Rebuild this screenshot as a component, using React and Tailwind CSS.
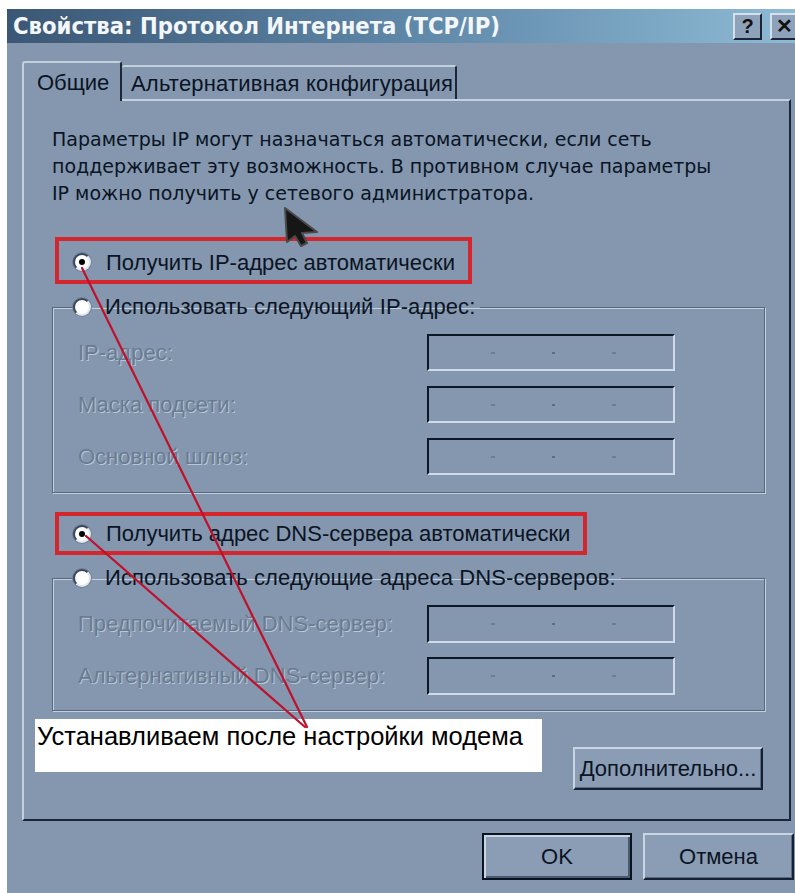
import React from "react";

const ui = { fontFamily: '"Liberation Sans", Arial, sans-serif' };
const para = { fontFamily: '"DejaVu Sans", "Liberation Sans", sans-serif' };

function Radio({ checked }) {
  return (
    <span className="relative flex h-[18px] w-[18px] shrink-0 items-center justify-center rounded-full border-2 border-t-[#3b4659] border-l-[#3b4659] border-b-[#dfe6ee] border-r-[#dfe6ee] bg-white shadow-[0_0_0_1px_#6f8299]">
      {checked && <span className="h-[6px] w-[6px] rounded-full bg-black" />}
    </span>
  );
}

function IpBox({ h = 37 }) {
  return (
    <div
      className={`flex w-[248px] items-center border-2 border-t-[#0e1726] border-l-[#0e1726] border-b-[#cfdbe8] border-r-[#cfdbe8] bg-[#8497ae] ${h === 38 ? "h-[38px]" : "h-[37px]"}`}
    >
      <span className="ml-[62px] h-[2px] w-[4px] bg-[#6d7d92]" />
      <span className="ml-[57px] h-[2px] w-[3px] bg-[#5d6c80]" />
      <span className="ml-[57px] h-[2px] w-[4px] bg-[#6d7d92]" />
    </div>
  );
}

function FieldRow({ label, h }) {
  return (
    <div className="flex items-center">
      <span
        className="w-[374px] pl-[25px] text-[22px] leading-[24px] text-[#6a7b91] [text-shadow:1px_1px_0_#b8c6d6]"
        style={ui}
      >
        {label}
      </span>
      <IpBox h={h} />
    </div>
  );
}

function Button({ children, className = "", isDefault = false }) {
  return (
    <div
      className={`flex items-center justify-center bg-[#8a9db4] text-[22px] text-[#0a1424] ${
        isDefault
          ? "border-2 border-[#0b1220] shadow-[inset_2px_2px_0_#c9d5e3,inset_-2px_-2px_0_#4a5a70]"
          : "border-2 border-t-[#c9d5e3] border-l-[#c9d5e3] border-b-[#162033] border-r-[#162033] shadow-[inset_-1px_-1px_0_#5a6b82]"
      } ${className}`}
      style={ui}
    >
      {children}
    </div>
  );
}

function Legend({ text, checked = false }) {
  return (
    <legend className="ml-[20px] flex h-[24px] items-center gap-[14px] pr-[5px]">
      <Radio checked={checked} />
      <span className="text-[22px] leading-[24px] tracking-[0.1px] text-[#0a1424]" style={ui}>
        {text}
      </span>
    </legend>
  );
}

export default function App() {
  return (
    <div className="relative h-[893px] w-[795px] overflow-hidden bg-white pl-[7px] pt-[9px]">
      <div className="flex h-[884px] w-[800px] flex-col bg-[#8497ae]">
        {/* caption */}
        <div className="flex h-[34px] items-center bg-gradient-to-r from-[#3b5775] via-[#5f87a8] to-[#8fbcd6] pl-[6px] pr-[8px]">
          <span
            className="text-[23.6px] font-bold leading-[28px] text-[#f4f7fa]"
            style={{ fontFamily: '"DejaVu Sans Condensed", "Liberation Sans", sans-serif' }}
          >
            Свойства: Протокол Интернета (TCP/IP)
          </span>
          <div className="ml-auto flex gap-[8px]">
            <div className="flex h-[27px] w-[29px] items-center justify-center border-2 border-t-[#d5e0ea] border-l-[#d5e0ea] border-b-[#1c2535] border-r-[#1c2535] bg-[#8ea3ba] text-[20px] font-bold text-[#111]" style={ui}>
              ?
            </div>
            <div className="flex h-[27px] w-[29px] items-center justify-center border-2 border-t-[#d5e0ea] border-l-[#d5e0ea] border-b-[#1c2535] border-r-[#1c2535] bg-[#8ea3ba] text-[20px] font-bold text-[#111]" style={ui}>
              ✕
            </div>
          </div>
        </div>

        {/* tabs */}
        <div className="ml-[15px] mt-[18px] flex items-end">
          <div className="relative z-10 -mb-[2px] flex h-[40px] w-[100px] items-center rounded-t-[3px] border-l-2 border-t-2 border-r-2 border-l-[#c3d0de] border-t-[#c3d0de] border-r-[#1b2638] bg-[#8497ae] pl-[13px] text-[22px] text-[#0a1424]" style={ui}>
            Общие
          </div>
          <div className="flex h-[34px] w-[335px] items-center rounded-t-[3px] border-t-2 border-r-2 border-t-[#c3d0de] border-r-[#1b2638] pl-[9px] text-[22px] tracking-[0.2px] text-[#0a1424]" style={ui}>
            Альтернативная конфигурация
          </div>
        </div>

        {/* page */}
        <div className="ml-[15px] flex h-[722px] w-[769px] flex-col border-2 border-t-[#c3d0de] border-l-[#c3d0de] border-b-[#1b2638] border-r-[#1b2638] pt-[25px]">
          <p className="ml-[28px] text-[19px] leading-[27px] text-[#0a1424]" style={para}>
            Параметры IP могут назначаться автоматически, если сеть
            <br />
            поддерживает эту возможность. В противном случае параметры
            <br />
            IP можно получить у сетевого администратора.
          </p>

          <div className="ml-[31px] mt-[30px] flex h-[47px] w-[417px] items-center gap-[15px] border-4 border-[#d3262d] pl-[14px] pt-[3px]">
            <Radio checked />
            <span className="text-[22px] text-[#0a1424]" style={ui}>
              Получить IP-адрес автоматически
            </span>
          </div>

          <fieldset className="ml-[28px] mt-[11px] w-[713px] border border-[#56677e] pb-[17px] shadow-[inset_1px_1px_0_#c3d0de,1px_1px_0_#c3d0de]">
            <Legend text="Использовать следующий IP-адрес:" />
            <div className="mt-[15px] flex flex-col gap-[15px]">
              <FieldRow label="IP-адрес:" />
              <FieldRow label="Маска подсети:" />
              <FieldRow label="Основной шлюз:" />
            </div>
          </fieldset>

          <div className="ml-[31px] mt-[19px] flex h-[43px] w-[532px] items-center gap-[15px] border-4 border-[#d3262d] pl-[14px]">
            <Radio checked />
            <span className="text-[22px] text-[#0a1424]" style={ui}>
              Получить адрес DNS-сервера автоматически
            </span>
          </div>

          <fieldset className="ml-[28px] mt-[11px] w-[713px] border border-[#56677e] pb-[15px] shadow-[inset_1px_1px_0_#c3d0de,1px_1px_0_#c3d0de]">
            <Legend text="Использовать следующие адреса DNS-серверов:" />
            <div className="mt-[15px] flex flex-col gap-[14px]">
              <FieldRow label="Предпочитаемый DNS-сервер:" h={38} />
              <FieldRow label="Альтернативный DNS-сервер:" h={38} />
            </div>
          </fieldset>

          <div className="mt-[8px] flex items-start">
            <div className="ml-[11px] h-[53px] w-[507px] bg-white pl-[2px] pt-[2px] text-[25.5px] leading-[30px] text-black" style={ui}>
              Устанавливаем после настройки модема
            </div>
            <Button className="ml-[31px] mt-[28px] h-[43px] w-[190px]">Дополнительно...</Button>
          </div>
        </div>

        {/* dialog buttons */}
        <div className="mt-[12px] flex gap-[11px] pl-[475px]">
          <Button isDefault className="h-[47px] w-[150px]">
            OK
          </Button>
          <Button className="h-[47px] w-[151px]">Отмена</Button>
        </div>
      </div>

      {/* annotation arrows */}
      <svg className="pointer-events-none absolute left-0 top-0" width="795" height="893">
        <g stroke="#c0102c" strokeWidth="2.2" strokeLinecap="round">
          <line x1="82" y1="268" x2="307" y2="727" />
          <line x1="86" y1="536" x2="305" y2="727" />
        </g>
      </svg>

      {/* mouse pointer */}
      <svg className="pointer-events-none absolute left-[281px] top-[206px] blur-[0.6px]" width="42" height="44" viewBox="0 0 42 44">
        <path
          d="M4 2 L6 36 L14 30 L20 40 L26 37 L21 27 L36 26 Z"
          fill="#161616"
          stroke="#4a4a4a"
          strokeWidth="2"
          strokeLinejoin="round"
        />
      </svg>
    </div>
  );
}
